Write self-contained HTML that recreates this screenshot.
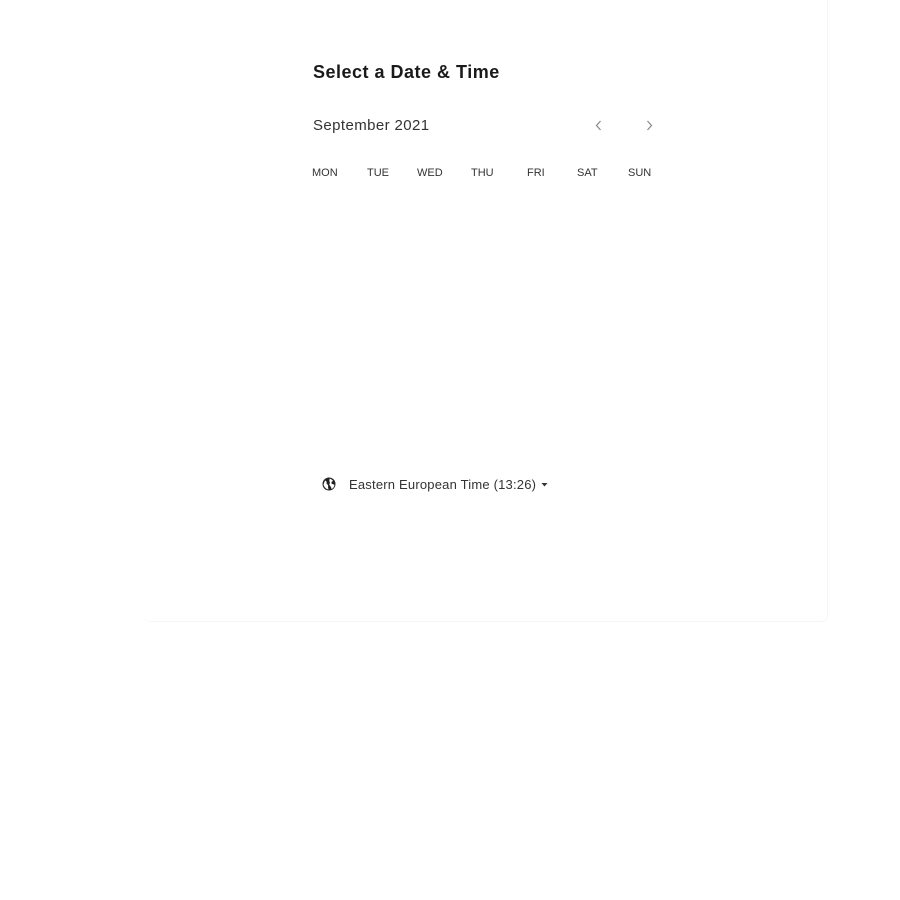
<!DOCTYPE html>
<html><head><meta charset="utf-8"><style>
html,body{margin:0;padding:0;background:#fff;width:900px;height:900px;overflow:hidden;font-family:"Liberation Sans",sans-serif;}
.card{position:absolute;left:144px;top:-5px;width:683px;height:626px;border-right:1px solid #f6f6f6;border-bottom:1px solid #f6f6f6;border-radius:0 0 6px 6px;}
.t{position:absolute;white-space:nowrap;color:#1a1a1a;}
h1{position:absolute;left:313px;top:62px;margin:0;font-size:18px;font-weight:bold;color:#1a1a1a;letter-spacing:0.5px;}
.month{left:313px;top:117px;font-size:15px;color:#333;letter-spacing:0.4px;}
.d{top:167px;font-size:11px;color:#333;}
.tz{left:349px;top:477px;font-size:13px;color:#333;letter-spacing:0.2px;}
</style></head><body>
<div class="card"></div>
<h1>Select a Date &amp; Time</h1>
<div class="t month">September 2021</div>
<svg style="position:absolute;left:593px;top:119px" width="12" height="14"><path d="M7.5 2 L3.5 6.5 L7.5 11" fill="none" stroke="#888" stroke-width="1.2"/></svg>
<svg style="position:absolute;left:644px;top:119px" width="12" height="14"><path d="M3.5 2 L7.5 6.5 L3.5 11" fill="none" stroke="#888" stroke-width="1.2"/></svg>
<div class="t d" style="left:312px">MON</div>
<div class="t d" style="left:367px">TUE</div>
<div class="t d" style="left:417px">WED</div>
<div class="t d" style="left:471px">THU</div>
<div class="t d" style="left:527px">FRI</div>
<div class="t d" style="left:577px">SAT</div>
<div class="t d" style="left:628px">SUN</div>
<svg style="position:absolute;left:321px;top:476px" width="16" height="16" viewBox="0 0 16 16"><circle cx="8" cy="8" r="6.5" fill="#222"/><path d="M4 4.5 C5.5 5 6 6 5.5 7.5 C6.5 8.5 7.5 9 7 11 L7.5 13.5 C5 13 3 11 2.5 8.5 Z M9 2.5 C10 3.5 11.5 3.5 12 5 C10.5 5.5 10 6.5 11 8 C12 8 13 8.5 13.5 9 C13 11 12 12.5 10.5 13 C10.5 11 9 10 8.5 9 C8 8 9.5 7 8.5 5.5 C8 4.5 8.5 3 9 2.5 Z" fill="#fff"/></svg>
<div class="t tz">Eastern European Time (13:26)</div>
<svg style="position:absolute;left:541px;top:482px" width="8" height="6"><path d="M0.5 1 L6.5 1 L3.5 4.5 Z" fill="#333"/></svg>
</body></html>
